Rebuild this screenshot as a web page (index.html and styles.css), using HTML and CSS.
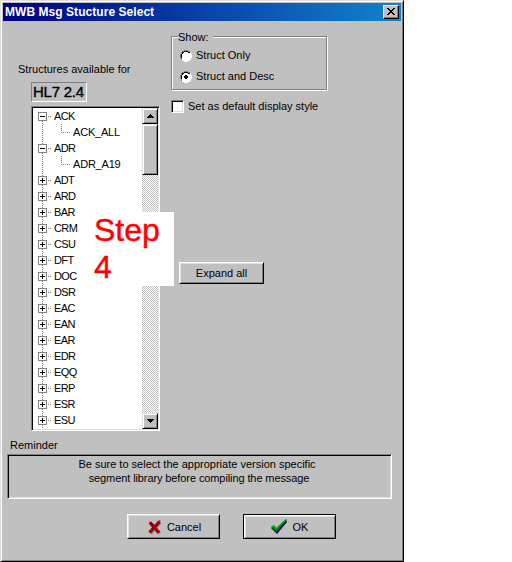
FILE: index.html
```
<!DOCTYPE html>
<html lang="en">
<head>
<meta charset="utf-8">
<title>MWB Msg Stucture Select</title>
<link rel="stylesheet" href="styles.css">
</head>
<body>
<main class="window">
  <header class="titlebar">
    <h1 class="title">MWB Msg Stucture Select</h1>
    <button class="close" aria-label="Close"><svg width="8" height="7" viewBox="0 0 8 7" shape-rendering="crispEdges"><path d="M0 0h2v1h1v1h2v-1h1v-1h2v1h-1v1h-1v1h-1v1h1v1h1v1h1v1h-2v-1h-1v-1h-2v1h-1v1h-2v-1h1v-1h1v-1h1v-1h-1v-1h-1v-1h-1z"/></svg></button>
  </header>
  <div class="content">
    <section class="structures">
      <p class="caption">Structures available for</p>
      <div class="version">HL7 2.4</div>
      <div class="treebox">
        <ul class="tree" id="tree"></ul>
        <div class="scrollbar">
          <div class="sbtn"><svg width="7" height="4" shape-rendering="crispEdges"><path d="M3 0h1v1h1v1h1v1h1v1h-7v-1h1v-1h1v-1h1z"/></svg></div>
          <div class="thumb"></div>
          <div class="track"></div>
          <div class="sbtn"><svg width="7" height="4" shape-rendering="crispEdges"><path d="M0 0h7v1h-1v1h-1v1h-1v1h-1v-1h-1v-1h-1v-1h-1z"/></svg></div>
        </div>
        <div class="step">Step<br>4</div>
      </div>
    </section>
    <section class="options">
      <div class="group">
        <span class="legend">Show:</span>
        <label class="choice"><svg class="radio" width="12" height="12"><use href="#radio"/></svg><span>Struct Only</span></label>
        <label class="choice"><svg class="radio" width="12" height="12"><use href="#radio"/><path d="M5 4h2v1h1v2h-1v1h-2v-1h-1v-2h1z" shape-rendering="crispEdges"/></svg><span>Struct and Desc</span></label>
      </div>
      <label class="default"><span class="check"></span><span>Set as default display style</span></label>
      <button class="button expand"><span>Expand all</span></button>
    </section>
  </div>
  <p class="remlabel">Reminder</p>
  <div class="reminder"><p>Be sure to select the appropriate version specific</p><p class="second">segment library before compiling the message</p></div>
  <footer class="actions">
    <button class="button cancel"><svg width="14" height="15" viewBox="0 0 14 15"><path d="M2.5 3.5L11.5 13.5M12 2.5L2.5 13.5" fill="none" stroke="#808080" stroke-width="3.4"/><path d="M2 2.5L11 12.5M11.5 1.5L1.5 12.5" fill="none" stroke="#900000" stroke-width="3.2"/><path d="M1 2.5L3 2M6.5 5.5L11 .8H12.5M1 12L4 9M9 9l2 2" fill="none" stroke="#f00000"/></svg><span>Cancel</span></button>
    <button class="button ok"><svg width="17" height="16" viewBox="0 0 17 16"><path d="M0 9l3-2 3 3 9-9 1 2-10 12z" fill="#000080"/><path d="M0 8l3-2 2 3 10-9 1 1-11 12z" fill="#008000"/><path d="M1 8l2-1 2 3 10-9" fill="none" stroke="#00c000"/></svg><span>OK</span></button>
  </footer>
</main>
<svg class="defs" width="0" height="0"><defs><g id="radio" shape-rendering="crispEdges"><path d="M4 1h4v1h2v2h1v4h-1v2h-2v1h-4v-1h-2v-2h-1v-4h1v-2h2z" fill="#fff"/><path d="M4 0h4v1h2v1h-2v-1h-4v1h-2v2h-1v4h1v2h-1v-2h-1v-4h1v-2h1v-1h2z" fill="#808080"/><path d="M4 1h4v1h2v1h-2v-1h-4v1h-1v1h-1v4h-1v-4h1v-2h2z"/><path d="M10 2h1v2h1v4h-1v2h-1v1h-2v1h-4v-1h-2v-1h2v1h4v-1h2v-2h1v-4h-1z" fill="#fff"/></g></defs></svg>
<script src="tree.js"></script>
</body>
</html>
```
FILE: styles.css
```
* { box-sizing: border-box; }
body { margin: 0; background: #fff; color: #000; font: 11px/13px "Liberation Sans", Arial, sans-serif; }
p, h1, ul { margin: 0; padding: 0; }
button { font: inherit; color: inherit; padding: 0; border-radius: 0; }
svg { display: block; flex: none; }
.defs { position: absolute; }
.window { width: 404px; height: 562px; background: #c0c0c0; border: 1px solid; border-color: #dfdfdf #000 #000 #dfdfdf; box-shadow: inset 1px 1px #fff, inset -1px -1px #808080; padding: 2px; display: flex; flex-direction: column; }
.titlebar { height: 18px; display: flex; align-items: center; justify-content: space-between; padding: 0 2px; background: linear-gradient(90deg, #000080, #1084d0); }
.title { color: #fff; font-size: 12px; line-height: 18px; font-weight: bold; letter-spacing: .05px; white-space: nowrap; }
.close { width: 16px; height: 14px; background: #c0c0c0; border: 1px solid; border-color: #fff #000 #000 #fff; box-shadow: inset -1px -1px #808080; display: flex; align-items: center; justify-content: center; padding: 0 1px 1px 0; }
.content { display: flex; height: 410px; }
.structures { width: 157px; margin-left: 11px; padding: 42px 0 0 5px; }
.caption, .legend, .choice, .default, .button, .remlabel, .reminder { white-space: nowrap; }
.caption { margin-left: -1px; }
.version { margin: 6px 0 4px 12px; width: 56px; height: 20px; border: 1px solid; border-color: #808080 #fff #fff #808080; font: 15px/18px "Liberation Sans", Arial, sans-serif; letter-spacing: -.25px; -webkit-text-stroke: .4px #000; padding-left: 1px; white-space: nowrap; }
.treebox { position: relative; display: flex; width: 129px; height: 325px; margin-left: 12px; background: #fff; border: 1px solid; border-color: #808080 #fff #fff #808080; padding: 1px; box-shadow: inset 1px 1px #000, inset -1px -1px #dfdfdf; }
.tree { list-style: none; width: 109px; height: 321px; overflow: hidden; background: repeating-linear-gradient(#808080 0 1px, transparent 1px 2px) 9px 13px / 1px 308px no-repeat; }
.row { display: flex; align-items: center; height: 16px; padding-left: 5px; letter-spacing: -.6px; }
.box { flex: none; width: 9px; height: 9px; margin-top: 1px; border: 1px solid #808080; background: linear-gradient(#000, #000) 1px 3px / 5px 1px no-repeat, #fff; }
.plus { background: linear-gradient(#000, #000) 1px 3px / 5px 1px no-repeat, linear-gradient(#000, #000) 3px 1px / 1px 5px no-repeat, #fff; }
.dots { flex: none; width: 7px; height: 1px; margin-top: 1px; background: linear-gradient(90deg, transparent 1px, #808080 1px 2px, transparent 2px 3px, #808080 3px 4px, transparent 4px); }
.child { padding-left: 28px; letter-spacing: -.2px; }
.elbow { flex: none; width: 12px; height: 9px; align-self: flex-start; background: repeating-linear-gradient(#808080 0 1px, transparent 1px 2px) 0 0 / 1px 9px no-repeat, repeating-linear-gradient(90deg, #808080 0 1px, transparent 1px 2px) 0 8px / 10px 1px no-repeat; }
.scrollbar { width: 16px; display: flex; flex-direction: column; height: 321px; }
.sbtn, .thumb { background: #c0c0c0; border: 1px solid; border-color: #dfdfdf #000 #000 #dfdfdf; box-shadow: inset 1px 1px #fff, inset -1px -1px #808080; flex: none; }
.sbtn { height: 16px; display: flex; align-items: center; justify-content: center; }
.thumb { height: 51px; }
.track { flex: 1; background: conic-gradient(#c0c0c0 25%, #fff 0 50%, #c0c0c0 0 75%, #fff 0) 0 0 / 2px 2px; }
.step { position: absolute; left: 55px; top: 105px; width: 87px; height: 74px; background: #fff; color: #f00; font-size: 32px; line-height: 37px; padding-left: 7px; -webkit-text-stroke: .4px #f00; }
.options { padding: 15px 0 0; width: 160px; }
.group { position: relative; width: 156px; height: 54px; border: 1px solid #808080; box-shadow: 1px 1px #fff, inset 1px 1px #fff; padding: 12px 0 0 8px; }
.legend { position: absolute; left: 6px; top: -6px; background: #c0c0c0; padding: 0 4px 0 0; }
.choice { display: flex; align-items: center; gap: 4px; height: 13px; margin-bottom: 8px; }
.default { display: flex; align-items: center; gap: 4px; height: 13px; margin-top: 10px; }
.check { width: 13px; height: 13px; background: #fff; border: 1px solid; border-color: #808080 #fff #fff #808080; box-shadow: inset 1px 1px #000, inset -1px -1px #dfdfdf; }
.button { display: flex; align-items: center; justify-content: center; background: #c0c0c0; border: 1px solid; border-color: #fff #000 #000 #fff; box-shadow: inset 1px 1px #dfdfdf, inset -1px -1px #808080; }
.expand { width: 85px; height: 22px; margin: 149px 0 0 8px; }
.remlabel { margin: 8px 0 0 7px; }
.reminder { width: 385px; height: 45px; margin: 2px 0 0 4px; border: 1px solid; border-color: #808080 #fff #fff #808080; box-shadow: inset 1px 1px #000, inset -1px -1px #dfdfdf; text-align: center; line-height: 14px; padding: 2px 5px 0 0; }
.second { letter-spacing: -.1px; padding-left: 4px; }
.actions { display: flex; gap: 23px; margin: 15px 0 0 124px; }
.actions .button { width: 93px; height: 25px; gap: 5px; padding-top: 1px; }
.actions .cancel { padding-left: 2px; }
.actions .ok { border-color: #000; box-shadow: inset 1px 1px #fff, inset -1px -1px #808080, inset 2px 2px #dfdfdf; }
```
FILE: tree.js
```
const rows = ["-ACK", " ACK_ALL", "-ADR", " ADR_A19", "+ADT", "+ARD", "+BAR", "+CRM", "+CSU", "+DFT", "+DOC", "+DSR", "+EAC", "+EAN", "+EAR", "+EDR", "+EQQ", "+ERP", "+ESR", "+ESU"];
document.getElementById("tree").innerHTML = rows.map(r => {
  const name = `<span>${r.slice(1)}</span>`;
  if (r[0] === " ") return `<li class="row child"><i class="elbow"></i>${name}</li>`;
  return `<li class="row"><i class="box${r[0] === "+" ? " plus" : ""}"></i><i class="dots"></i>${name}</li>`;
}).join("");
```
